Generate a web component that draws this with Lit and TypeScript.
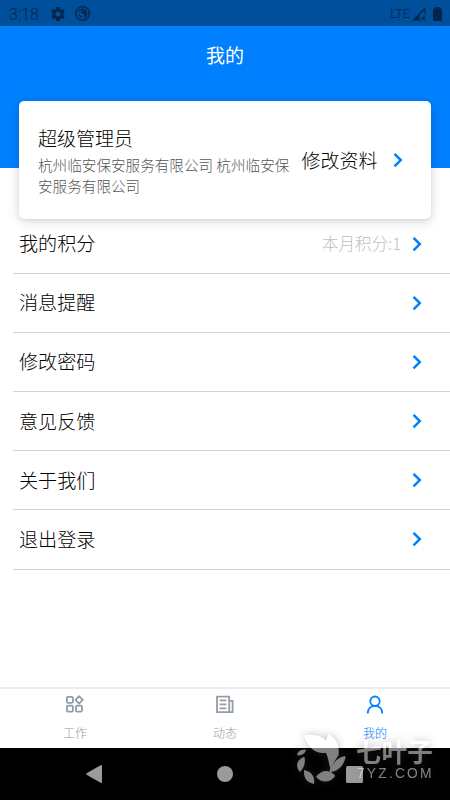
import { LitElement, html, css, svg } from "lit";
import { customElement, property } from "lit/decorators.js";

@customElement("chevron-icon")
export class ChevronIcon extends LitElement {
  static styles = css`
    :host { display: block; width: 10px; height: 16px; flex: none; }
    svg { display: block; }
    path { fill: none; stroke: #0080ff; stroke-width: 2.5; }
  `;
  render() {
    return html`<svg width="10" height="16" viewBox="0 0 10 16"><path d="M1.500 1.800L7.800 8.100L1.500 14.400" /></svg>`;
  }
}

@customElement("menu-row")
export class MenuRow extends LitElement {
  @property() label = "";
  @property() extra = "";
  static styles = css`
    :host {
      display: flex; align-items: center; box-sizing: border-box; height: 59.2px;
      margin-left: 13px; padding: 0 28px 0 6px; border-bottom: 1px solid #d4d4d4;
    }
    .label { flex: 1; font-size: 19.1px; line-height: 28px; color: #000; padding-bottom: 1px; }
    .extra { font-size: 16.5px; line-height: 24px; color: #c0c0c0; margin-right: 11px; padding-bottom: 1px; }
  `;
  render() {
    return html`<span class="label">${this.label}</span>
      <span class="extra">${this.extra}</span>
      <chevron-icon></chevron-icon>`;
  }
}

const tabIcons = {
  work: svg`<rect x="1.900" y="1.900" width="6" height="6" rx="1.200"/><path d="M14.100 1.200L17.700 4.900L14.100 8.600L10.500 4.900Z" stroke-linejoin="round"/><rect x="1.900" y="10.600" width="6" height="6" rx="1.200"/><rect x="11" y="10.600" width="6" height="6" rx="1.200"/>`,
  news: svg`<path d="M14.200 17.200H2V1.600H14.200V17.200H17.600V5.800H14.200M4.600 5.300H11.400M4.600 9.300H11.400M4.600 13.300H11.400" stroke-linejoin="round"/>`,
  me: svg`<circle cx="10" cy="6.200" r="4.700"/><path d="M2.700 18.400C2.700 13.500 5.800 10.900 10 10.900C14.200 10.900 17.300 13.500 17.300 18.400"/>`,
};

@customElement("tab-item")
export class TabItem extends LitElement {
  @property() label = "";
  @property() icon: keyof typeof tabIcons = "work";
  @property({ type: Boolean, reflect: true }) active = false;
  static styles = css`
    :host { flex: 1; display: flex; flex-direction: column; align-items: center; color: #929da7; padding-top: 6px; }
    :host([active]) { color: #0080ff; }
    svg { display: block; fill: none; stroke: currentColor; stroke-width: 1.8; }
    span { font-size: 12px; line-height: 18px; margin-top: 8.5px; }
  `;
  render() {
    return html`<svg width="20" height="20" viewBox="0 0 20 20">${tabIcons[this.icon]}</svg><span>${this.label}</span>`;
  }
}

@customElement("app-root")
export class AppRoot extends LitElement {
  static styles = css`
    :host {
      display: flex; flex-direction: column; position: relative; width: 450px; height: 800px;
      overflow: hidden; background: #fff; color: #000;
      font-family: "Noto Sans CJK SC", sans-serif; font-weight: 300;
    }
    .status {
      display: flex; align-items: center; height: 26px; box-sizing: border-box; flex: none;
      padding: 1px 8px 0 9px; background: #004f9b; color: #04264a;
      font-family: Roboto, sans-serif; font-weight: 300;
    }
    .time { font-size: 16px; width: 42px; padding-top: 1px; }
    .status svg { display: block; fill: #04264a; }
    .ring { margin-left: 9px; }
    .lte { margin-left: auto; font-size: 13px; letter-spacing: -0.2px; margin-right: 2px; }
    .battery { margin-left: 7px; }
    .head { height: 142px; flex: none; background: #0080ff; }
    .title { text-align: center; font-size: 19px; line-height: 28px; padding-top: 15px; color: #fff; font-weight: 400; }
    .card {
      display: flex; align-items: center; box-sizing: border-box; flex: none; height: 118px;
      margin: -67px 19px 0; padding: 0 28px 0 19px; background: #fff; border-radius: 5px;
      box-shadow: 0 2px 12px rgba(0, 0, 0, 0.17), 0 1px 2px rgba(0, 0, 0, 0.08);
    }
    .who { width: 256px; flex: none; }
    .name { font-size: 19px; line-height: 28px; }
    .org { font-size: 14.6px; line-height: 21px; color: #555; margin-top: 2px; }
    .edit { font-size: 19px; line-height: 28px; margin-left: 7.5px; margin-right: auto; white-space: nowrap; }
    .list { flex: 1; margin-top: -4.6px; }
    .tabs { display: flex; height: 61px; box-sizing: border-box; border-top: 2px solid #ececec; flex: none; }
    .nav { display: flex; height: 52px; flex: none; background: #000; }
    .nav span { flex: 1; display: flex; justify-content: center; align-items: center; }
    .nav svg { display: block; fill: #9b9b9b; }
    .nav .back { flex: none; width: 150px; box-sizing: border-box; justify-content: flex-start; padding-left: 86px; }
    .nav .recent { flex: none; width: 150px; box-sizing: border-box; justify-content: flex-start; padding-left: 46px; }
    .mark { position: absolute; left: 290px; top: 726px; width: 160px; height: 74px; color: #fff; opacity: 0.5; filter: drop-shadow(0 0 4px rgba(70, 70, 70, 0.7)); }
    .mark svg { display: block; fill: currentColor; overflow: visible; }
    .brand, .site { position: absolute; white-space: nowrap; }
    .brand { left: 66px; top: 14px; font-size: 25.6px; line-height: 22px; font-weight: 700; }
    .site { left: 67px; top: 39px; font: 500 13.8px/18px "Liberation Sans", sans-serif; letter-spacing: 2.2px; }
  `;

  render() {
    return html`
      <div class="status">
        <span class="time">3:18</span>
        <svg width="14" height="14" viewBox="2 2 20 20"><path d="M19.4 13c.1-.7.1-1.3 0-2l2.100-1.600c.2-.2.2-.4.1-.6l-2-3.500c-.1-.2-.4-.3-.6-.2l-2.500 1c-.5-.4-1.100-.7-1.700-1l-.4-2.600c0-.3-.2-.5-.5-.5h-4c-.2 0-.4.2-.5.4l-.4 2.700c-.6.2-1.200.6-1.700 1l-2.500-1c-.2-.1-.5 0-.6.2l-2 3.500c-.1.2-.1.5.1.6L4.500 11c-.1.700-.1 1.300 0 2l-2.100 1.600c-.2.2-.2.4-.1.6l2 3.500c.1.2.4.3.6.2l2.500-1c.5.4 1.100.7 1.700 1l.4 2.700c0 .2.2.4.5.4h4c.2 0 .5-.2.5-.4l.4-2.700c.6-.3 1.200-.6 1.700-1l2.500 1c.2.1.5 0 .6-.2l2-3.500c.1-.2.1-.4-.1-.6zM12 15.600a3.600 3.600 0 110-7.200 3.600 3.600 0 010 7.200z" fill-rule="evenodd"/></svg>
        <svg class="ring" width="17" height="17" viewBox="0 0 16 16"><circle cx="8" cy="8" r="6.500" fill="none" stroke="#04264a" stroke-width="1.300"/><path d="M4.300 6.500A4 4 0 1 1 9.500 11.700" fill="none" stroke="#04264a" stroke-width="1.100"/><path d="M6.100 6.300A3 3 0 0 1 10.600 10.300ZM4 8L8.300 12.200A4.300 4.300 0 0 1 4 8Z"/></svg>
        <span class="lte">LTE</span>
        <svg width="14" height="14" viewBox="0 0 14 14"><path d="M0 13.500L13.500 0V7.500H12.300V3.200L7.500 8V12H8.500V13.500Z"/><path d="M9.800 9.800L13 13M13 9.800L9.800 13" stroke="#04264a" stroke-width="1.200"/></svg>
        <svg class="battery" width="9" height="14" viewBox="0 0 9 14"><path d="M2.500 0H6.500V1.500H8Q9 1.500 9 2.500V13Q9 14 8 14H1Q0 14 0 13V2.500Q0 1.500 1 1.500H2.500Z"/></svg>
      </div>
      <div class="head"><div class="title">我的</div></div>
      <div class="card">
        <div class="who">
          <div class="name">超级管理员</div>
          <div class="org">杭州临安保安服务有限公司 杭州临安保安服务有限公司</div>
        </div>
        <span class="edit">修改资料</span>
        <chevron-icon></chevron-icon>
      </div>
      <div class="list">
        <menu-row label="我的积分" extra="本月积分:1"></menu-row>
        ${["消息提醒", "修改密码", "意见反馈", "关于我们", "退出登录"].map((t) => html`<menu-row label=${t}></menu-row>`)}
      </div>
      <div class="tabs">
        <tab-item icon="work" label="工作"></tab-item>
        <tab-item icon="news" label="动态"></tab-item>
        <tab-item icon="me" label="我的" active></tab-item>
      </div>
      <div class="nav">
        <span class="back"><svg width="16" height="18" viewBox="0 0 16 18"><path d="M15 0Q16 0 16 1V17Q16 18 15 18L.6 9.700Q0 9 .6 8.300Z"/></svg></span>
        <span><svg width="16" height="16" viewBox="0 0 16 16"><circle cx="8" cy="8" r="8"/></svg></span>
        <span class="recent"><svg width="17" height="17" viewBox="0 0 17 17"><rect width="17" height="17" rx="1.500"/></svg></span>
      </div>
      <div class="mark">
        <svg width="60" height="58" viewBox="0 138 180 174">
          <path d="M42 167C70 160 96 166 108 182C110 174 112 168 116 162C142 178 148 198 146 224C138 238 130 248 122 268C116 250 116 236 108 218C84 224 54 206 42 167Z"/>
          <path d="M167 229C154 228 140 238 130 252C120 264 118 272 120 277C148 274 164 252 167 229Z"/>
          <path d="M78 290C96 268 120 268 136 288C118 310 96 310 78 290Z"/>
          <path d="M42 270C64 274 76 290 72 312C50 308 40 294 42 270Z"/>
          <path d="M43 230C18 240 16 260 30 276C42 264 48 248 43 230Z"/>
          <path d="M21 226C24 212 34 208 49 210C44 222 34 228 21 226Z"/>
        </svg>
        <span class="brand">七叶子</span>
        <span class="site">7YZ.COM</span>
      </div>
    `;
  }
}
